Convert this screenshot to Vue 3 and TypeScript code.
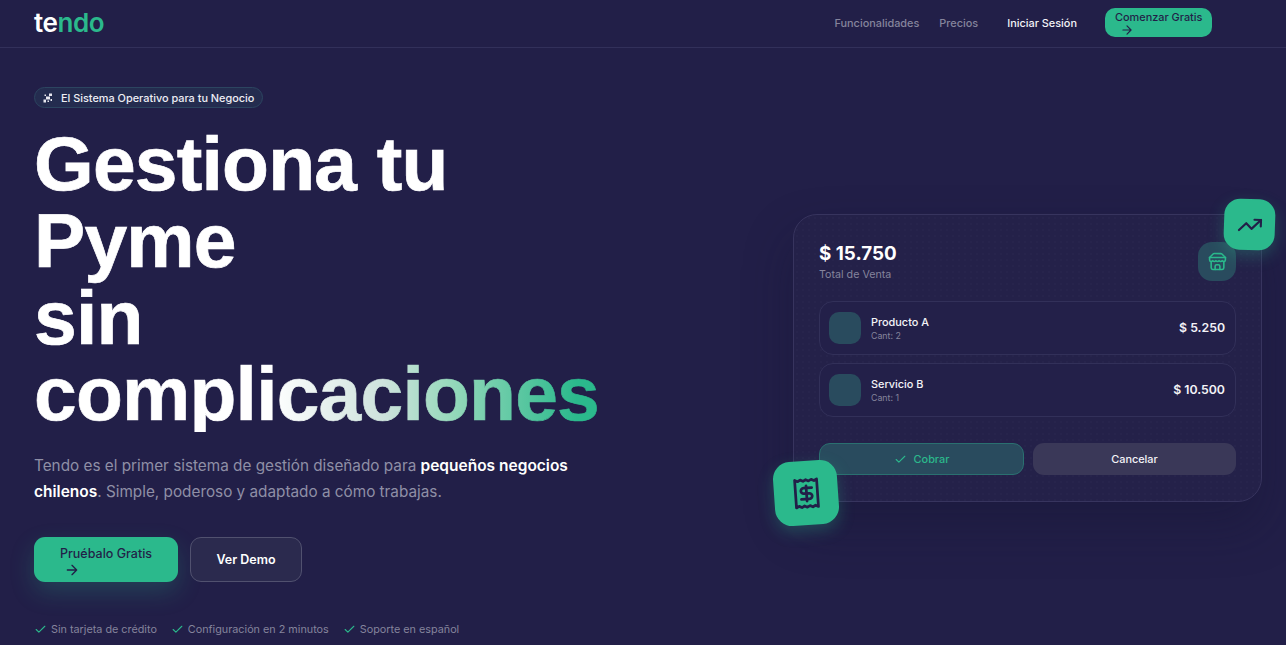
<script setup lang="ts">
const perks: string[] = ['Sin tarjeta de crédito', 'Configuración en 2 minutos', 'Soporte en español']
const rows = [
  { name: 'Producto A', qty: 'Cant: 2', price: '$ 5.250' },
  { name: 'Servicio B', qty: 'Cant: 1', price: '$ 10.500' },
]
</script>

<template>
  <div class="page">
    <header class="nav">
      <div class="logo">te<span>ndo</span></div>
      <nav class="links">
        <a class="muted first">Funcionalidades</a>
        <a class="muted">Precios</a>
        <a class="login">Iniciar Sesión</a>
        <a class="start">
          Comenzar Gratis
          <svg class="arrow" viewBox="0 0 24 24"><path d="M5 12h14M12 5l7 7-7 7" /></svg>
        </a>
      </nav>
    </header>
    <main class="hero">
      <section class="left">
        <div class="badge">
          <svg viewBox="0 0 24 24" class="spark">
            <path d="M8 9h8v6H8zM14 3h6v5h-6zM3 15h5v6H3zM17 14h3v4h-3zM5 5h3v3H5zM11 17h3v3h-3z" />
          </svg>
          <span>El Sistema Operativo para tu Negocio</span>
        </div>
        <h1>Gestiona tu<br />Pyme<br />sin<br /><span class="grad">complicaciones</span></h1>
        <p class="lead">
          Tendo es el primer sistema de gestión diseñado para <b>pequeños negocios chilenos</b>. Simple, poderoso y adaptado a cómo trabajas.
        </p>
        <div class="cta">
          <a class="primary">
            Pruébalo Gratis
            <svg class="arrow" viewBox="0 0 24 24"><path d="M5 12h14M12 5l7 7-7 7" /></svg>
          </a>
          <a class="ghost">Ver Demo</a>
        </div>
        <ul class="perks">
          <li v-for="p in perks" :key="p">
            <svg viewBox="0 0 24 24"><path d="M20 6 9 17l-5-5" /></svg>
            {{ p }}
          </li>
        </ul>
      </section>
      <section class="right">
        <div class="card">
          <div class="float up">
            <svg viewBox="0 0 24 24"><path d="M22 7 13.5 15.5 8.5 10.5 2 17" /><path d="M16 7h6v6" /></svg>
          </div>
          <div class="float down">
            <svg viewBox="0 0 24 24">
              <path d="M4 2v20l2-1 2 1 2-1 2 1 2-1 2 1 2-1 2 1V2l-2 1-2-1-2 1-2-1-2 1-2-1-2 1Z" />
              <path d="M16 8h-6a2 2 0 1 0 0 4h4a2 2 0 1 1 0 4H8" />
              <path d="M12 17.5v-11" />
            </svg>
          </div>
          <div class="top">
            <div>
              <div class="total">$ 15.750</div>
              <div class="label">Total de Venta</div>
            </div>
            <div class="store">
              <svg viewBox="0 0 24 24">
                <path d="m2 7 4.4-4.4A2 2 0 0 1 7.8 2h8.4a2 2 0 0 1 1.4.6L22 7" />
                <path d="M4 12v8a2 2 0 0 0 2 2h12a2 2 0 0 0 2-2v-8" />
                <path d="M15 22v-4a2 2 0 0 0-2-2h-2a2 2 0 0 0-2 2v4" />
                <path d="M2 7h20" />
                <path d="M22 7v3a2 2 0 0 1-2 2 2.7 2.7 0 0 1-2-1 2.7 2.7 0 0 1-2 1 2.7 2.7 0 0 1-2-1 2.7 2.7 0 0 1-2 1 2.7 2.7 0 0 1-2-1 2.7 2.7 0 0 1-2 1 2.7 2.7 0 0 1-2-1 2.7 2.7 0 0 1-2 1 2 2 0 0 1-2-2V7" />
              </svg>
            </div>
          </div>
          <div class="rows">
            <div v-for="r in rows" :key="r.name" class="row">
              <div class="thumb"></div>
              <div class="info">
                <div class="name">{{ r.name }}</div>
                <div class="qty">{{ r.qty }}</div>
              </div>
              <div class="price">{{ r.price }}</div>
            </div>
          </div>
          <div class="actions">
            <button class="pay">
              <svg viewBox="0 0 24 24"><path d="M20 6 9 17l-5-5" /></svg>
              Cobrar
            </button>
            <button class="cancel">Cancelar</button>
          </div>
        </div>
      </section>
    </main>
  </div>
</template>

<style>
html, body { margin: 0; background: #221f48; }
</style>

<style scoped>
.page {
  width: 1286px;
  height: 645px;
  overflow: hidden;
  background: #221f48;
  color: #fff;
  font-family: Inter, "Noto Sans", sans-serif;
}
.nav {
  height: 45px;
  border-bottom: 1px solid #32305a;
  display: flex;
  align-items: center;
  justify-content: space-between;
  padding: 0 74px 2px 34px;
}
.logo {
  font-size: 26px;
  font-weight: 600;
  letter-spacing: -0.4px;
  color: #fff;
  line-height: 1;
}
.logo span { color: #2bb98c; }
.links {
  display: flex;
  align-items: center;
  font-size: 10.9px;
  font-weight: 500;
}
.muted { color: #85849c; margin-right: 20px; }
.login { color: #f3f3f7; margin-left: 9px; margin-right: 28px; }
.start {
  width: 107px;
  height: 29px;
  box-sizing: border-box;
  padding: 3px 10px 0;
  background: #2bb98c;
  border-radius: 10px;
  color: #221f48;
  line-height: 12px;
  font-size: 10.9px;
  white-space: nowrap;
  display: block;
}
.arrow {
  width: 14px;
  height: 14px;
  display: block;
  margin: 0 0 0 5px;
  fill: none;
  stroke: currentColor;
  stroke-width: 2;
  stroke-linecap: round;
  stroke-linejoin: round;
}
.hero {
  display: grid;
  grid-template-columns: 600px 1fr;
  padding: 39px 24px 0 34px;
}
.badge {
  width: 229px;
  height: 21px;
  box-sizing: border-box;
  border: 1px solid #2c4560;
  background: #242c4f;
  border-radius: 11px;
  display: flex;
  align-items: center;
  gap: 7px;
  padding-left: 7px;
  font-size: 10.9px;
  font-weight: 500;
  color: #eeeef4;
  white-space: nowrap;
}
.spark { width: 12px; height: 12px; fill: #e8e8f0; flex: none; }
h1 {
  margin: 17px 0 0;
  font-family: "Liberation Sans", Arial, sans-serif;
  font-size: 76.8px;
  line-height: 76.8px;
  font-weight: 700;
  letter-spacing: -0.8px;
  -webkit-text-stroke: 0.7px currentColor;
  white-space: nowrap;
}
.grad {
  background: linear-gradient(90deg, #fff 42%, #cde2dc 62%, #9adabd 73%, #2bb98c 96%);
  -webkit-background-clip: text;
  background-clip: text;
  color: transparent;
  display: inline-block;
}
.lead {
  margin: 21px 0 0;
  width: 560px;
  font-size: 15.3px;
  line-height: 26px;
  color: #8f8fa6;
}
.lead b { color: #fff; font-weight: 600; font-size: 15.5px; }
.cta { display: flex; gap: 12px; margin-top: 32px; }
.primary {
  width: 144px;
  height: 45px;
  box-sizing: border-box;
  background: #2bb98c;
  color: #221f48;
  border-radius: 11px;
  padding: 9px 0 0 26px;
  font-size: 12.5px;
  font-weight: 500;
  line-height: 16px;
  white-space: nowrap;
  box-shadow: 0 10px 24px rgba(43, 185, 140, 0.22);
}
.primary .arrow { width: 16px; height: 16px; margin: 0 0 0 4px; }
.ghost {
  width: 112px;
  height: 45px;
  box-sizing: border-box;
  border: 1px solid #51516f;
  background: #2b2a4e;
  border-radius: 11px;
  font-size: 12.5px;
  font-weight: 600;
  display: flex;
  align-items: center;
  justify-content: center;
}
.perks {
  list-style: none;
  margin: 41px 0 0;
  padding: 0;
  display: flex;
  gap: 14px;
  font-size: 10.8px;
  color: #85849c;
}
.perks li { display: flex; align-items: center; gap: 4px; white-space: nowrap; }
.perks svg, .pay svg {
  width: 13px;
  height: 13px;
  fill: none;
  stroke: #2bb98c;
  stroke-width: 2;
  stroke-linecap: round;
  stroke-linejoin: round;
}
.right { padding: 127px 0 0 159px; }
.card {
  position: relative;
  width: 469px;
  height: 288px;
  box-sizing: border-box;
  padding: 26px 25px 0;
  border: 1px solid #37345e;
  border-radius: 24px;
  background-color: #242149;
  background-image: radial-gradient(rgba(255, 255, 255, 0.035) 0.6px, transparent 0.8px);
  background-size: 6px 6px;
  box-shadow: 0 24px 48px rgba(20, 19, 50, 0.35);
}
.float {
  position: absolute;
  width: 51px;
  height: 51px;
  border-radius: 16px;
  background: #2bb98c;
  color: #221f48;
  display: flex;
  align-items: center;
  justify-content: center;
  box-shadow: 0 6px 16px rgba(43, 185, 140, 0.28);
  z-index: 2;
}
.float svg { fill: none; stroke: currentColor; stroke-width: 2; stroke-linecap: round; stroke-linejoin: round; }
.up { top: -16px; right: -14px; transform: rotate(2deg); }
.up svg { width: 26px; height: 26px; }
.down { top: 246px; left: -20px; width: 64px; height: 64px; border-radius: 17px; transform: rotate(-4deg); }
.down svg { width: 33px; height: 33px; }
.top {
  display: flex;
  justify-content: space-between;
  align-items: flex-start;
  height: 40px;
}
.total { font-size: 18.8px; font-weight: 700; line-height: 24px; margin-top: 1px; }
.label { font-size: 10.7px; color: #85849c; margin-top: 2px; }
.store {
  width: 38px;
  height: 39px;
  border-radius: 14px;
  background: #294b5e;
  display: flex;
  align-items: center;
  justify-content: center;
  margin-top: 1px;
}
.store svg { width: 19px; height: 19px; fill: none; stroke: #2bb98c; stroke-width: 2; stroke-linecap: round; stroke-linejoin: round; }
.rows { display: flex; flex-direction: column; gap: 8px; margin-top: 20px; }
.row {
  height: 54px;
  box-sizing: border-box;
  border: 1px solid #323059;
  border-radius: 14px;
  background: #232049;
  display: flex;
  align-items: center;
  padding: 0 10px 0 9px;
}
.thumb { width: 32px; height: 32px; border-radius: 10px; background: #294b5e; }
.info { margin-left: 10px; flex: 1; }
.name { font-size: 10.9px; font-weight: 500; line-height: 14px; color: #f3f3f7; }
.qty { font-size: 8.8px; color: #85849c; line-height: 12px; margin-top: 1px; }
.price { font-size: 12.3px; font-weight: 600; color: #f3f3f7; padding-bottom: 2px; }
.actions { display: flex; gap: 9px; margin-top: 26px; }
.actions button {
  flex: 1;
  height: 32px;
  box-sizing: border-box;
  border-radius: 11px;
  font-family: inherit;
  font-size: 10.9px;
  font-weight: 500;
  display: flex;
  align-items: center;
  justify-content: center;
  gap: 7px;
}
.pay { background: #294b5e; border: 1px solid #2a7070; color: #2bb98c; }
.cancel { background: #3a3858; border: none; color: #f3f3f7; }
</style>
